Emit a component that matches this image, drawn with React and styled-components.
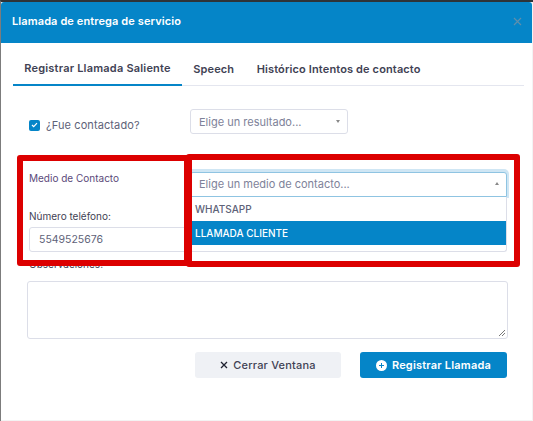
import React from "react";
import styled, { createGlobalStyle } from "styled-components";

const Global = createGlobalStyle`
  html, body { margin: 0; padding: 0; width: 533px; height: 421px; overflow: hidden; background: #f3f3f3; }
  * { box-sizing: border-box; }
  #root { height: 421px; font-family: Inter, "Open Sans", sans-serif; }
`;

const Backdrop = styled.div`
  height: 421px;
  padding-right: 1px;
  border-top: 2px solid #2e3338;
  border-left: 1px solid #7c7c7c;
`;
const Dialog = styled.div`
  position: relative;
  height: 418px;
  background: #fff;
  border-radius: 3px 3px 0 0;
  overflow: hidden;
`;
const Header = styled.header`
  height: 41px;
  background: #0585c8;
  display: flex;
  align-items: center;
  justify-content: space-between;
  padding: 0 10px 3px 11px;
`;
const Title = styled.h5`
  margin: 0;
  color: #fff;
  font-size: 11px;
  font-weight: 600;
  letter-spacing: 0.1px;
`;
const Close = styled.span`
  display: flex;
  color: #5f8fac;
`;
const Tabs = styled.nav`
  display: flex;
  margin: 12px 8px 0 12px;
  height: 31px;
  border-bottom: 1px solid #e4e6ef;
`;
const Tab = styled.div`
  padding: 0 11.25px 4px;
  height: 31px;
  display: flex;
  align-items: center;
  font-size: 11px;
  font-weight: 600;
  color: #3f4254;
  border-bottom: ${(p) => (p.$active ? "2px solid #0585c8" : "none")};
  letter-spacing: ${(p) => (p.$active ? "0.2px" : "0.13px")};
`;
const Form = styled.div`
  padding: 23px 25px 0 28px;
  display: flex;
  flex-direction: column;
`;
const ContactRow = styled.div`
  display: flex;
  align-items: center;
  height: 25px;
`;
const CheckLabel = styled.label`
  width: 161px;
  display: flex;
  align-items: center;
  gap: 6px;
  color: #5e6278;
  font-size: 11px;
  margin-top: 7px;
  letter-spacing: 0.1px;
`;
const CheckBox = styled.span`
  width: 11px;
  height: 11px;
  border-radius: 2px;
  background: #0585c8;
  display: flex;
  align-items: center;
  justify-content: center;
`;
const SelectBox = styled.div`
  display: flex;
  align-items: center;
  justify-content: space-between;
  width: ${(p) => p.$width}px;
  height: 25px;
  padding: 0 7px ${(p) => (p.$open ? "2px" : "0")} 8px;
  border: 1px solid ${(p) => (p.$open ? "#8fc4e2" : "#dcdee8")};
  border-radius: ${(p) => (p.$open ? "3px 3px 0 0" : "3px")};
  box-shadow: ${(p) => (p.$open ? "0 -1px 0 2px #cfe6f4" : "none")};
  background: #fff;
  color: #7e8299;
  font-size: 11px;
`;
const Caret = styled.span`
  width: 0;
  height: 0;
  border-left: 2px solid transparent;
  border-right: 2px solid transparent;
  ${(p) => (p.$up ? "border-bottom: 3px solid #888;" : "border-top: 3px solid #888;")}
`;
const MedioGrid = styled.div`
  display: grid;
  grid-template-columns: 161px 1fr;
  margin-top: 38px;
  position: relative;
`;
const Stack = styled.div`
  display: flex;
  flex-direction: column;
`;
const Label = styled.div`
  font-size: 10px;
  color: #3f4254;
  line-height: 14px;
  height: 14px;
`;
const MedioLabel = styled(Label)`
  margin-top: -1px;
  color: #5b4a7a;
`;
const PhoneLabel = styled(Label)`
  margin-top: 24px;
`;
const PhoneInput = styled.div`
  width: 158px;
  height: 25px;
  margin-top: 4px;
  padding: 0 9px;
  display: flex;
  align-items: center;
  border: 1px solid #dcdee8;
  border-radius: 3px;
  font-size: 10.5px;
  color: #5e6278;
`;
const Dropdown = styled.ul`
  position: absolute;
  left: 0;
  top: 25px;
  width: 317px;
  height: 55px;
  margin: 0;
  padding: 0;
  list-style: none;
  background: #fff;
  border: 1px solid #dcdee8;
  border-top: 0;
  border-radius: 0 0 3px 3px;
`;
const Option = styled.li`
  height: 24px;
  padding-left: 4px;
  display: flex;
  align-items: center;
  font-size: 10px;
  font-weight: 500;
  color: ${(p) => (p.$selected ? "#fff" : "#5e6278")};
  background: ${(p) => (p.$selected ? "#0585c8" : "transparent")};
`;
const SelectWrap = styled.div`
  position: relative;
`;
const ObsLabel = styled(Label)`
  margin-top: 5px;
`;
const Notes = styled.div`
  position: relative;
  height: 58px;
  margin: 10px 0 0 -2px;
  width: 481px;
  border: 1px solid #dcdee8;
  border-radius: 3px;
`;
const Grip = styled.svg`
  position: absolute;
  right: 1px;
  bottom: 1px;
`;
const Actions = styled.div`
  display: flex;
  justify-content: flex-end;
  gap: 19px;
  margin-top: 13px;
`;
const Button = styled.button`
  width: ${(p) => p.$width}px;
  height: 26px;
  border: 0;
  border-radius: 3px;
  display: flex;
  align-items: center;
  justify-content: center;
  gap: 5px;
  font-family: inherit;
  font-size: 11px;
  font-weight: ${(p) => (p.$primary ? 600 : 500)};
  background: ${(p) => (p.$primary ? "#0585c8" : "#eff1f5")};
  color: ${(p) => (p.$primary ? "#fff" : "#3f4254")};
  letter-spacing: 0.2px;
`;
const RedFrame = styled.div`
  position: absolute;
  left: ${(p) => p.$x}px;
  top: ${(p) => p.$y}px;
  width: ${(p) => p.$w}px;
  height: ${(p) => p.$h}px;
  border: 6px solid #dc0000;
  border-radius: 3px;
  pointer-events: none;
`;

export default function App() {
  return (
    <>
      <Global />
      <Backdrop>
        <Dialog>
          <Header>
            <Title>Llamada de entrega de servicio</Title>
            <Close>
              <svg width="9" height="9" viewBox="0 0 9 9">
                <path d="M1 1l7 7M8 1l-7 7" stroke="currentColor" strokeWidth="1.2" />
              </svg>
            </Close>
          </Header>
          <Tabs>
            <Tab $active>Registrar Llamada Saliente</Tab>
            <Tab>Speech</Tab>
            <Tab>Histórico Intentos de contacto</Tab>
          </Tabs>
          <Form>
            <ContactRow>
              <CheckLabel>
                <CheckBox>
                  <svg width="7" height="6" viewBox="0 0 7 6">
                    <path d="M1 3l1.7 1.7L6 1.2" stroke="#fff" strokeWidth="1.2" fill="none" />
                  </svg>
                </CheckBox>
                ¿Fue contactado?
              </CheckLabel>
              <SelectBox $width={158}>
                Elige un resultado...
                <Caret />
              </SelectBox>
            </ContactRow>
            <MedioGrid>
              <Stack>
                <MedioLabel>Medio de Contacto</MedioLabel>
                <PhoneLabel>Número teléfono:</PhoneLabel>
                <PhoneInput>5549525676</PhoneInput>
              </Stack>
              <SelectWrap>
                <SelectBox $width={317} $open>
                  Elige un medio de contacto...
                  <Caret $up />
                </SelectBox>
                <Dropdown>
                  <Option>WHATSAPP</Option>
                  <Option $selected>LLAMADA CLIENTE</Option>
                </Dropdown>
              </SelectWrap>
            </MedioGrid>
            <ObsLabel>Observaciones:</ObsLabel>
            <Notes>
              <Grip width="8" height="8" viewBox="0 0 8 8">
                <path d="M1 7l6-6M4 7l3-3" stroke="#555" strokeWidth="0.8" />
              </Grip>
            </Notes>
            <Actions>
              <Button $width={146}>
                <svg width="8" height="8" viewBox="0 0 8 8">
                  <path d="M1 1l6 6M7 1l-6 6" stroke="#1f2230" strokeWidth="1.3" />
                </svg>
                Cerrar Ventana
              </Button>
              <Button $width={147} $primary>
                <svg width="11" height="11" viewBox="0 0 11 11">
                  <circle cx="5.5" cy="5.5" r="5.5" fill="#fff" />
                  <path d="M5.5 3v5M3 5.5h5" stroke="#0585c8" strokeWidth="1" />
                </svg>
                Registrar Llamada
              </Button>
            </Actions>
          </Form>
          <RedFrame $x={16} $y={153} $w={173} $h={111} />
          <RedFrame $x={185} $y={152} $w={334} $h={113} />
        </Dialog>
      </Backdrop>
    </>
  );
}
